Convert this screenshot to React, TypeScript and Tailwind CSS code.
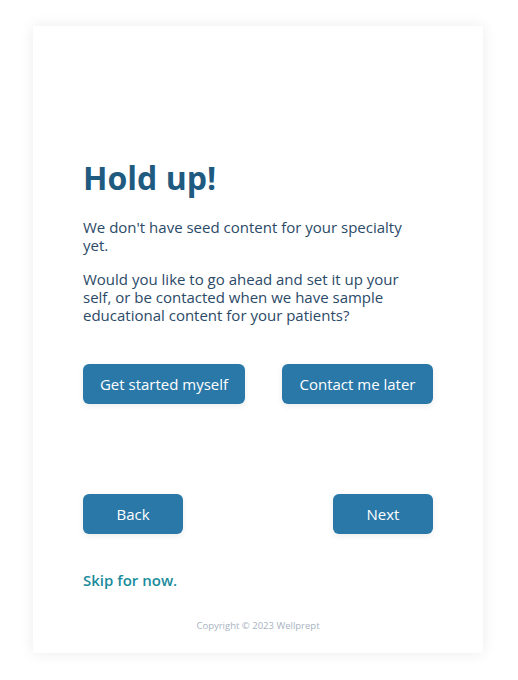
export default function App() {
  return (
    <div className="min-h-[680px] bg-white pt-[26px] pb-[27px] font-['Open_Sans',sans-serif]">
      <div className="ml-[33px] w-[450px] h-[627px] bg-white shadow-[0_0_14px_rgba(0,0,0,0.08)] px-[50px] pt-[132px] flex flex-col">
        <h1 className="text-[32px] font-bold leading-[40px] text-[#1f5a80]">Hold up!</h1>
        <p className="mt-[20px] w-[330px] text-[15px] leading-[18px] text-[#2b4a68]">
          We don't have seed content for your specialty yet.
        </p>
        <p className="mt-[16px] w-[330px] text-[15px] leading-[18px] text-[#2b4a68]">
          Would you like to go ahead and set it up your self, or be contacted when we have sample educational content for your patients?
        </p>
        <div className="mt-[40px] flex justify-between">
          <button className="w-[162px] h-[40px] rounded-[6px] bg-[#2a78a8] text-white text-[15px] shadow-[0_2px_6px_rgba(0,0,0,0.08)]">
            Get started myself
          </button>
          <button className="w-[151px] h-[40px] rounded-[6px] bg-[#2a78a8] text-white text-[15px] shadow-[0_2px_6px_rgba(0,0,0,0.08)]">
            Contact me later
          </button>
        </div>
        <div className="mt-[90px] flex justify-between">
          <button className="w-[100px] h-[40px] rounded-[6px] bg-[#2a78a8] text-white text-[15px] shadow-[0_2px_6px_rgba(0,0,0,0.08)]">
            Back
          </button>
          <button className="w-[100px] h-[40px] rounded-[6px] bg-[#2a78a8] text-white text-[15px] shadow-[0_2px_6px_rgba(0,0,0,0.08)]">
            Next
          </button>
        </div>
        <a className="mt-[36px] self-start text-[15px] font-semibold leading-[20px] text-[#1a8c9c] cursor-pointer">
          Skip for now.
        </a>
        <p className="mt-[29px] text-center text-[9.5px] text-[#a9b3bf]">Copyright © 2023 Wellprept</p>
      </div>
    </div>
  );
}
